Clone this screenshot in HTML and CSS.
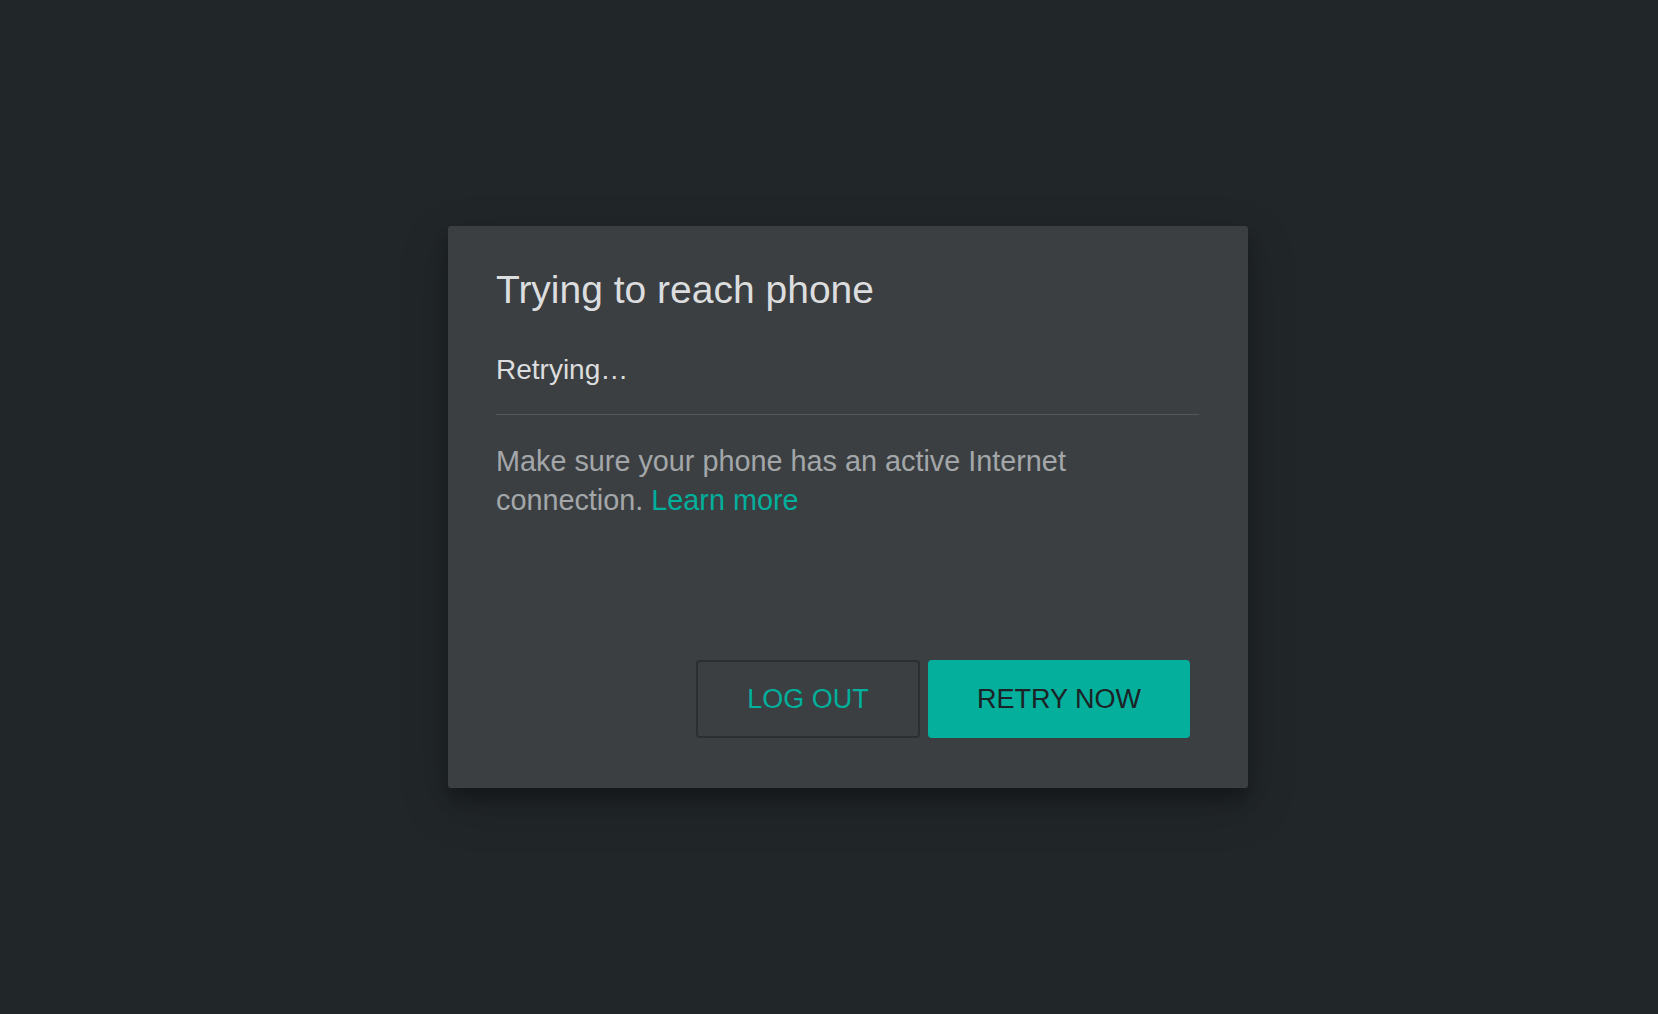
FILE: index.html
```html
<!DOCTYPE html>
<html lang="en">
<head>
	<meta charset="UTF-8">
	<title>Trying to reach phone</title>
	<link rel="stylesheet" href="styles.css">
</head>
<body>
	<div class="overlay">
		<div class="popup">
			<h2 class="popup-title">Trying to reach phone</h2>
			<p class="popup-status">Retrying…</p>
			<p class="popup-text">
				Make sure your phone has an active Internet connection. <a href="#">Learn more</a>
			</p>
			<div class="popup-buttons">
				<button class="btn btn-plain">LOG OUT</button>
				<button class="btn btn-solid">RETRY NOW</button>
			</div>
		</div>
	</div>
</body>
</html>
```

FILE: styles.css
```css
body, div, h2, p {
	margin: 0;
	padding: 0;
}

body {
	background-color: #212629;
	font-family: "Liberation Sans", Arial, sans-serif;
}

.overlay {
	display: flex;
	align-items: center;
	justify-content: center;
	min-height: 100vh;
	padding-left: 38px;
	box-sizing: border-box;
}

.popup {
	width: 800px;
	box-sizing: border-box;
	padding: 40px 49px 50px 48px;
	background-color: #3b3f42;
	border-radius: 3px;
	box-shadow: 0 17px 50px rgba(0, 0, 0, .19), 0 12px 15px rgba(0, 0, 0, .24);
}

.popup-title {
	font-size: 39px;
	line-height: 48px;
	font-weight: normal;
	color: #dcddde;
}

.popup-status {
	margin-top: 38px;
	padding-bottom: 26px;
	border-bottom: 1px solid #52565a;
	font-size: 28px;
	line-height: 36px;
	color: #dcddde;
}

.popup-text {
	margin-top: 27px;
	font-size: 28.8px;
	line-height: 39px;
	color: #a4a7a9;
}

.popup-text a {
	color: #00af9c;
	text-decoration: none;
}

.popup-buttons {
	display: flex;
	justify-content: flex-end;
	gap: 8px;
	margin-top: 140px;
	margin-right: 9px;
}

.btn {
	height: 78px;
	box-sizing: border-box;
	border-radius: 4px;
	font-family: "Liberation Sans", Arial, sans-serif;
	font-size: 27px;
	cursor: pointer;
}

.btn-plain {
	width: 224px;
	border: 2px solid #2a2f32;
	background-color: transparent;
	color: #00af9c;
}

.btn-solid {
	width: 262px;
	border: none;
	background-color: #04af9c;
	color: #1c2225;
}
```
